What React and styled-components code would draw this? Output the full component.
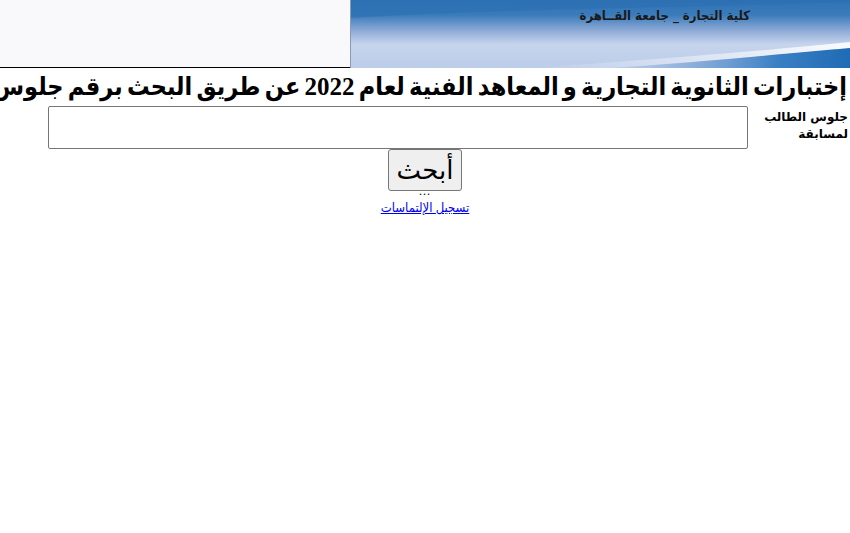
import React from "react";
import styled, { createGlobalStyle } from "styled-components";

const Global = createGlobalStyle`
  html, body { margin: 0; padding: 0; background: #ffffff; }
  body { font-family: "Liberation Serif", "DejaVu Sans", serif; color: #000; }
`;

const Page = styled.div`
  direction: rtl;
  width: 850px;
  overflow: hidden;
`;

const Header = styled.div`
  display: flex;
  height: 68px;
`;

const Banner = styled.div`
  position: relative;
  width: 499px;
  height: 68px;
  flex: none;
  border-left: 1px solid #8a9ab8;
  overflow: hidden;
`;

const BannerArt = styled.svg`
  display: block;
  width: 100%;
  height: 100%;
`;

const BannerTitle = styled.div`
  position: absolute;
  top: 8px;
  right: 100px;
  font-family: "DejaVu Sans Condensed", "DejaVu Sans", sans-serif;
  font-weight: bold;
  font-size: 13px;
  color: #1a1a1a;
  white-space: nowrap;
`;

const HeaderFill = styled.div`
  flex: 1;
  background: #f9f9fb;
  border-bottom: 1px solid #000;
`;

const Title = styled.h1`
  margin: 0;
  font-family: "Liberation Serif", "DejaVu Sans Condensed", "DejaVu Sans", serif;
  font-size: 25px;
  word-spacing: -2px;
  font-weight: bold;
  line-height: 38px;
  white-space: nowrap;
  text-align: right;
  padding-right: 3px;
`;

const FormRow = styled.div`
  display: flex;
  align-items: flex-start;
`;

const Label = styled.div`
  width: 100px;
  padding-right: 2px;
  padding-top: 3px;
  font-family: "DejaVu Sans", "Liberation Sans", sans-serif;
  font-weight: bold;
  font-size: 12px;
  line-height: 17px;
  text-align: right;
`;

const Field = styled.input`
  width: 700px;
  height: 43px;
  box-sizing: border-box;
  border: 1px solid #767676;
  border-radius: 2px;
  margin: 0;
`;

const Center = styled.div`
  display: flex;
  flex-direction: column;
  align-items: center;
`;

const SearchButton = styled.button`
  font-family: "Liberation Serif", "DejaVu Sans", serif;
  font-size: 26px;
  height: 42px;
  padding: 0 8px;
  background: #efefef;
  border: 1px solid #767676;
  border-radius: 3px;
  color: #000;
`;

const Dots = styled.div`
  font-size: 12px;
  line-height: 12px;
  height: 12px;
  margin-top: -6px;
  letter-spacing: 1px;
`;

const Link = styled.a`
  margin-top: 3px;
  font-family: "Liberation Serif", "DejaVu Sans Condensed", "DejaVu Sans", serif;
  font-size: 13px;
  color: #0000ee;
  text-decoration: underline;
`;

export default function App() {
  return (
    <Page>
      <Global />
      <Header>
        <Banner>
          <BannerArt viewBox="0 0 499 68" preserveAspectRatio="none">
            <defs>
              <linearGradient id="sky" x1="0" y1="0" x2="0" y2="1">
                <stop offset="0" stopColor="#2f72b4" />
                <stop offset="0.22" stopColor="#3a7bbb" />
                <stop offset="0.45" stopColor="#8eaad6" />
                <stop offset="0.65" stopColor="#c6d4ec" />
                <stop offset="1" stopColor="#bccde9" />
              </linearGradient>
              <linearGradient id="sheen" x1="0" y1="0" x2="1" y2="0">
                <stop offset="0" stopColor="#ffffff" stopOpacity="0" />
                <stop offset="0.6" stopColor="#ffffff" stopOpacity="0.5" />
                <stop offset="1" stopColor="#ffffff" stopOpacity="0.9" />
              </linearGradient>
              <linearGradient id="deep" x1="0" y1="0" x2="1" y2="0">
                <stop offset="0" stopColor="#6f9bd0" stopOpacity="0" />
                <stop offset="0.7" stopColor="#3a7fc4" />
                <stop offset="1" stopColor="#1f6bb5" />
              </linearGradient>
            </defs>
            <rect width="499" height="68" fill="url(#sky)" />
            <path d="M0 18 C120 10 300 8 499 2 L499 0 L0 0 Z" fill="#2c6fb2" opacity="0.6" />
            <path d="M180 68 C300 60 420 50 499 42 L499 48 C420 56 320 64 260 68 Z" fill="url(#sheen)" />
            <path d="M260 68 C340 63 430 54 499 48 L499 68 Z" fill="url(#deep)" />
          </BannerArt>
          <BannerTitle>كلية التجارة _ جامعة القــاهرة</BannerTitle>
        </Banner>
        <HeaderFill />
      </Header>
      <Title>إختبارات الثانوية التجارية و المعاهد الفنية لعام 2022 عن طريق البحث برقم جلوس</Title>
      <FormRow>
        <Label>
          جلوس الطالب
          <br />
          لمسابقة
        </Label>
        <Field type="text" />
      </FormRow>
      <Center>
        <SearchButton type="button">أبحث</SearchButton>
        <Dots>...</Dots>
        <Link href="#">تسجيل الإلتماسات</Link>
      </Center>
    </Page>
  );
}
